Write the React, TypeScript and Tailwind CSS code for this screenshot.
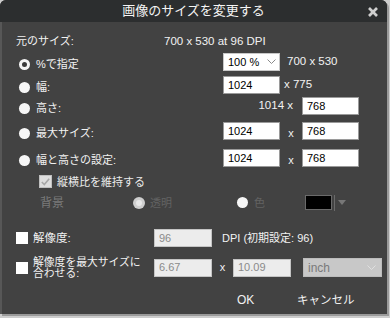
import React from "react";

const FONT = '"Liberation Sans", "Noto Sans CJK JP", sans-serif';

function Radio({ selected = false, disabled = false }: { selected?: boolean; disabled?: boolean }) {
  if (selected) {
    return <span className="block w-[11px] h-[11px] rounded-full border-[3px] border-[#f4f4f4] bg-[#3a3a3a] shrink-0" />;
  }
  if (disabled) {
    return (
      <span className="flex items-center justify-center w-[12px] h-[12px] rounded-full bg-[#cfcfcf] shrink-0">
        <span className="block w-[6px] h-[6px] rounded-full bg-[#e8e8e8]" />
      </span>
    );
  }
  return <span className="block w-[11px] h-[11px] rounded-full bg-[#f6f6f6] shrink-0" />;
}

function Input({ value, disabled = false, w = "w-[57px]" }: { value: string; disabled?: boolean; w?: string }) {
  return (
    <div
      className={`${w} h-[18px] shrink-0 flex items-center pl-[4px] text-[11px] leading-none border ${
        disabled ? "bg-[#ececec] border-[#c4c4c4] text-[#8a8a8a]" : "bg-white border-[#9a9a9a] text-black"
      }`}
    >
      {value}
    </div>
  );
}

function Chevron({ color }: { color: string }) {
  return (
    <svg width="9" height="6" viewBox="0 0 9 6" className="shrink-0">
      <polyline points="0.5,0.5 4.5,4.5 8.5,0.5" fill="none" stroke={color} strokeWidth="1" />
    </svg>
  );
}

function RadioLabel({ selected = false, label }: { selected?: boolean; label: string }) {
  return (
    <div className="w-[221px] shrink-0 flex items-center pl-[17px] pt-[4px] gap-[6px] text-[11px] leading-[14px] text-[#f2f2f2]">
      <Radio selected={selected} />
      <span>{label}</span>
    </div>
  );
}

export default function App() {
  return (
    <div className="w-[390px] h-[318px] bg-[#cdcdcd] overflow-hidden" style={{ fontFamily: FONT }}>
      <div className="w-[387px] h-[314px] rounded-t-[6px] overflow-hidden flex flex-col bg-[#424242] shadow-[2px_2px_0_#9a9a9a]">
        {/* title bar */}
        <div className="h-[22px] shrink-0 bg-[#2c2e2f] flex items-center relative">
          <span className="flex-1 text-center text-[13px] leading-[22px] text-[#f4f4f4]">画像のサイズを変更する</span>
          <svg width="10" height="10" viewBox="0 0 10 10" className="absolute left-[368px] top-[7px]">
            <line x1="1" y1="1" x2="9" y2="9" stroke="#cfcfcf" strokeWidth="2.6" />
            <line x1="9" y1="1" x2="1" y2="9" stroke="#cfcfcf" strokeWidth="2.6" />
          </svg>
        </div>

        {/* body */}
        <div className="flex-1 flex flex-col border-l-2 border-[#575757] text-[#f2f2f2] text-[11px]">
          {/* original size */}
          <div className="mt-[12px] h-[14px] flex items-center leading-[14px] pl-[14px]">
            <span className="w-[148px] shrink-0">元のサイズ:</span>
            <span className="text-[11.5px]">700 x 530 at 96 DPI</span>
          </div>

          {/* % */}
          <div className="mt-[5px] h-[18px] flex items-center">
            <RadioLabel selected label="%で指定" />
            <div className="w-[57px] h-[18px] shrink-0 bg-white border border-[#c8c8c8] flex items-center justify-between pl-[4px] pr-[3px] text-black leading-none">
              <span>100 %</span>
              <Chevron color="#8a8a8a" />
            </div>
            <span className="ml-[7px] text-[11.5px]">700 x 530</span>
          </div>

          {/* width */}
          <div className="mt-[5px] h-[18px] flex items-center">
            <RadioLabel label="幅:" />
            <Input value="1024" />
            <span className="ml-[4px] text-[11.5px]">x 775</span>
          </div>

          {/* height */}
          <div className="mt-[3px] h-[18px] flex items-center">
            <RadioLabel label="高さ:" />
            <span className="w-[79px] shrink-0 text-right pr-[9px] text-[11.5px]">1014 x</span>
            <Input value="768" />
          </div>

          {/* max size */}
          <div className="mt-[7px] h-[18px] flex items-center">
            <RadioLabel label="最大サイズ:" />
            <Input value="1024" />
            <span className="w-[22px] shrink-0 text-center pt-[4px]">x</span>
            <Input value="768" />
          </div>

          {/* width & height */}
          <div className="mt-[9px] h-[18px] flex items-center">
            <RadioLabel label="幅と高さの設定:" />
            <Input value="1024" />
            <span className="w-[22px] shrink-0 text-center pt-[4px]">x</span>
            <Input value="768" />
          </div>

          {/* keep aspect */}
          <div className="mt-[8px] h-[13px] flex items-center ml-[37px] gap-[5px]">
            <span className="w-[13px] h-[13px] shrink-0 bg-[#dedede] border border-[#c0c0c0] flex items-center justify-center">
              <svg width="9" height="8" viewBox="0 0 9 8">
                <polyline points="0.8,4 3.3,6.6 8.2,0.8" fill="none" stroke="#a8a8a8" strokeWidth="1.6" />
              </svg>
            </span>
            <span className="leading-[14px] text-[#ececec]">縦横比を維持する</span>
          </div>

          {/* background */}
          <div className="mt-[7px] h-[15px] flex items-center ml-[38px] text-[#7a7a7a] leading-[14px]">
            <span className="w-[93px] shrink-0 text-[12px]">背景</span>
            <Radio disabled />
            <span className="ml-[5px] w-[87px] shrink-0 text-[#626262]">透明</span>
            <span className="block w-[11px] h-[11px] rounded-full bg-[#f6f6f6] shrink-0" />
            <span className="ml-[6px] w-[51px] shrink-0 text-[#626262]">色</span>
            <span className="w-[27px] h-[15px] shrink-0 bg-black border border-[#6a6a6a]" />
            <span className="ml-[2px] w-px h-[16px] bg-[#6a6a6a] shrink-0" />
            <svg width="8" height="6" viewBox="0 0 8 6" className="ml-[3px] shrink-0">
              <polygon points="0,0 8,0 4,5" fill="#777" />
            </svg>
          </div>

          {/* resolution */}
          <div className="mt-[19px] h-[18px] flex items-center">
            <div className="w-[138px] ml-[14px] shrink-0 flex items-center gap-[5px]">
              <span className="w-[12px] h-[12px] bg-white shrink-0" />
              <span className="leading-[14px] text-[11.5px]">解像度:</span>
            </div>
            <Input value="96" disabled w="w-[58px]" />
            <span className="ml-[10px] leading-[14px]">DPI (初期設定: 96)</span>
          </div>

          {/* fit resolution */}
          <div className="mt-[11px] h-[19px] flex items-center">
            <div className="w-[138px] ml-[14px] shrink-0 flex items-center gap-[5px]">
              <span className="w-[12px] h-[12px] bg-white shrink-0" />
              <span className="leading-[11px] text-[10.8px] flex flex-col">
                <span>解像度を最大サイズに</span>
                <span>合わせる:</span>
              </span>
            </div>
            <Input value="6.67" disabled w="w-[58px]" />
            <span className="w-[21px] shrink-0 text-center">x</span>
            <Input value="10.09" disabled w="w-[58px]" />
            <div className="ml-[12px] w-[79px] h-[19px] shrink-0 bg-[#c8c8c8] border border-[#bcbcbc] flex items-center justify-between pl-[4px] pr-[5px] text-[12px] text-[#7a7a7a] leading-none">
              <span>inch</span>
              <Chevron color="#e0e0e0" />
            </div>
          </div>

          {/* buttons */}
          <div className="mt-[15px] h-[16px] flex items-center ml-[235px] leading-[16px]">
            <span className="w-[60px] shrink-0 text-[12px]">OK</span>
            <span className="text-[11.5px]">キャンセル</span>
          </div>
        </div>
      </div>
    </div>
  );
}
